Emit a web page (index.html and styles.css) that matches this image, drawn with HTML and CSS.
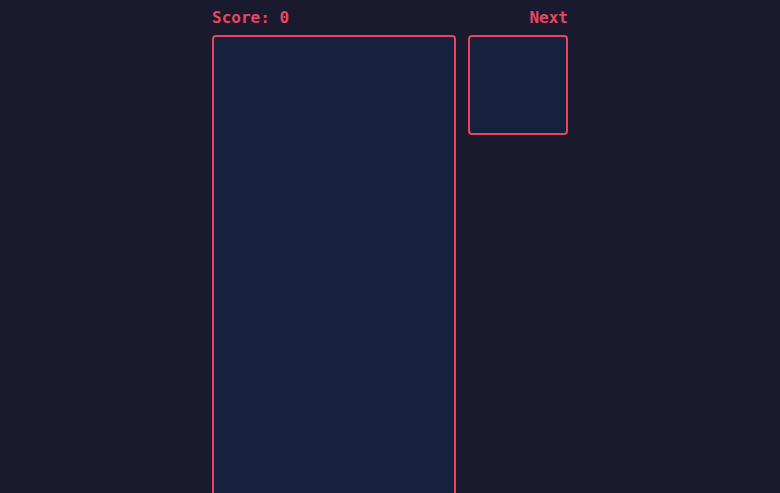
FILE: index.html
```html
<!DOCTYPE html>
<html lang="en">
<head>
<meta charset="utf-8">
<title>Tetris</title>
<link rel="stylesheet" href="styles.css">
</head>
<body>
<div class="game">
  <div class="col">
    <div class="label">Score: 0</div>
    <div class="board"></div>
  </div>
  <div class="col col-right">
    <div class="label">Next</div>
    <div class="next"></div>
  </div>
</div>
</body>
</html>
```
FILE: styles.css
```css
html, body {
  margin: 0;
  padding: 0;
  background: #1a1a2e;
  height: 100%;
  overflow: hidden;
}
.game {
  display: flex;
  justify-content: center;
  gap: 12px;
  padding-top: 8px;
  font-family: "DejaVu Sans Mono", monospace;
  font-weight: bold;
  font-size: 16px;
  color: #e94560;
}
.col {
  display: flex;
  flex-direction: column;
  gap: 8px;
}
.col-right {
  align-items: flex-end;
}
.label {
  line-height: 19px;
  height: 19px;
}
.board {
  width: 240px;
  height: 480px;
  background: #16213e;
  border: 2px solid #e94560;
  border-radius: 4px;
}
.next {
  width: 96px;
  height: 96px;
  background: #16213e;
  border: 2px solid #e94560;
  border-radius: 4px;
}
```
